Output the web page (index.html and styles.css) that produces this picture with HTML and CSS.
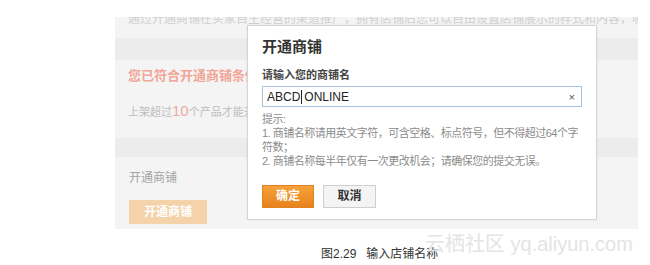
FILE: index.html
```html
<!DOCTYPE html>
<html lang="zh-CN">
<head>
  <meta charset="UTF-8">
  <title>输入店铺名称</title>
  <link rel="stylesheet" href="styles.css">
</head>
<body>
  <div class="stage">
    <div class="panel">
      <div class="intro"><span>通过开通商铺在买家自主经营的渠道推广，拥有店铺后您可以自由设置店铺展示的样式和内容，吸引更多的流量，</span></div>
      <div class="band"></div>
      <div class="section status">
        <div class="ok">您已符合开通商铺条件</div>
        <div class="rule">上架超过<em>10</em>个产品才能开通商铺</div>
      </div>
      <div class="band short"></div>
      <div class="section open">
        <div class="open-label">开通商铺</div>
        <div class="open-btn">开通商铺</div>
      </div>
    </div>

    <div class="modal">
      <h2>开通商铺</h2>
      <div class="field-label">请输入您的商铺名</div>
      <div class="field">
        <span class="value">ABCD<i class="caret"></i>ONLINE</span>
        <span class="clear">×</span>
      </div>
      <div class="hint">
        提示:<br>
        1. 商铺名称请用英文字符，可含空格、标点符号，但不得超过64个字<br>
        符数；<br>
        2. 商铺名称每半年仅有一次更改机会；请确保您的提交无误。
      </div>
      <div class="actions">
        <div class="btn primary">确定</div>
        <div class="btn">取消</div>
      </div>
    </div>

    <div class="watermark">云栖社区 yq.aliyun.com</div>
  </div>

  <div class="caption">图2.29&nbsp;&nbsp;&nbsp;输入店铺名称</div>
</body>
</html>
```

FILE: styles.css
```css
* {
  margin: 0;
  padding: 0;
  box-sizing: border-box;
}

body {
  font-family: 'Liberation Sans', 'Noto Sans CJK SC', sans-serif;
  background-color: #fff;
  color: #333;
  width: 650px;
  height: 265px;
  overflow: hidden;
}

.stage {
  position: relative;
  padding: 17px 0 0 115px;
}

.panel {
  width: 523px;
  height: 212px;
  background-color: #f4f4f4;
  overflow: hidden;
}

.intro {
  height: 21px;
  padding-left: 13px;
  overflow: hidden;
  white-space: nowrap;
  font-size: 12px;
  line-height: 12px;
  color: #d0d0d0;
}

.intro span {
  display: block;
  margin-top: -4px;
}

.band {
  height: 22px;
  background-color: #ececec;
}

.band.short {
  height: 19px;
}

.section {
  padding-left: 13px;
}

.status {
  height: 78px;
  padding-top: 8px;
}

.ok {
  font-size: 13px;
  line-height: 16px;
  font-weight: bold;
  color: #f1a697;
  white-space: nowrap;
}

.rule {
  margin-top: 19px;
  font-size: 11px;
  line-height: 16px;
  color: #bdbdbd;
  white-space: nowrap;
}

.rule em {
  font-style: normal;
  font-size: 15px;
  color: #efa9a0;
}

.open {
  height: 72px;
  padding-top: 13px;
  padding-left: 14px;
}

.open-label {
  font-size: 12px;
  line-height: 16px;
  color: #a5a5a5;
}

.open-btn {
  margin-top: 14px;
  width: 78px;
  height: 24px;
  line-height: 24px;
  text-align: center;
  font-size: 12px;
  font-weight: bold;
  color: #fff;
  background-color: #f4d3aa;
}

.modal {
  position: absolute;
  left: 247px;
  top: 25px;
  width: 350px;
  height: 195px;
  padding: 11px 14px 0 14px;
  background-color: #fff;
  border: 1px solid #d4d4d4;
  box-shadow: 0 0 3px rgba(0, 0, 0, 0.06);
}

.modal h2 {
  font-size: 15px;
  line-height: 20px;
  font-weight: bold;
  color: #333;
}

.field-label {
  margin-top: 10px;
  font-size: 11px;
  line-height: 16px;
  font-weight: bold;
  color: #444;
}

.field {
  margin-top: 3px;
  height: 21px;
  border: 1px solid #a9c2e2;
  display: flex;
  align-items: center;
  justify-content: space-between;
  padding: 0 6px 0 4px;
}

.value {
  display: flex;
  align-items: center;
  font-size: 12px;
  color: #222;
}

.caret {
  display: inline-block;
  width: 1px;
  height: 14px;
  margin: 0 2px 0 1px;
  background-color: #222;
}

.clear {
  font-size: 11px;
  color: #555;
}

.hint {
  margin-top: 5px;
  font-size: 11px;
  line-height: 14px;
  letter-spacing: -0.5px;
  color: #8c8c8c;
  white-space: nowrap;
}

.actions {
  margin-top: 17px;
  display: flex;
  gap: 9px;
}

.btn {
  width: 53px;
  height: 23px;
  line-height: 21px;
  text-align: center;
  font-size: 12px;
  font-weight: bold;
  color: #333;
  background-color: #f4f4f4;
  border: 1px solid #cfcfcf;
}

.btn.primary {
  width: 52px;
  color: #fff;
  background: linear-gradient(#f5a23a, #e8821c);
  border-color: #e0821f;
}

.watermark {
  position: absolute;
  left: 425px;
  top: 233px;
  font-size: 20px;
  line-height: 22px;
  color: #e4e4e4;
  white-space: nowrap;
}

.caption {
  margin-top: 17px;
  padding-left: 321px;
  font-size: 12px;
  line-height: 16px;
  color: #333;
}
```
